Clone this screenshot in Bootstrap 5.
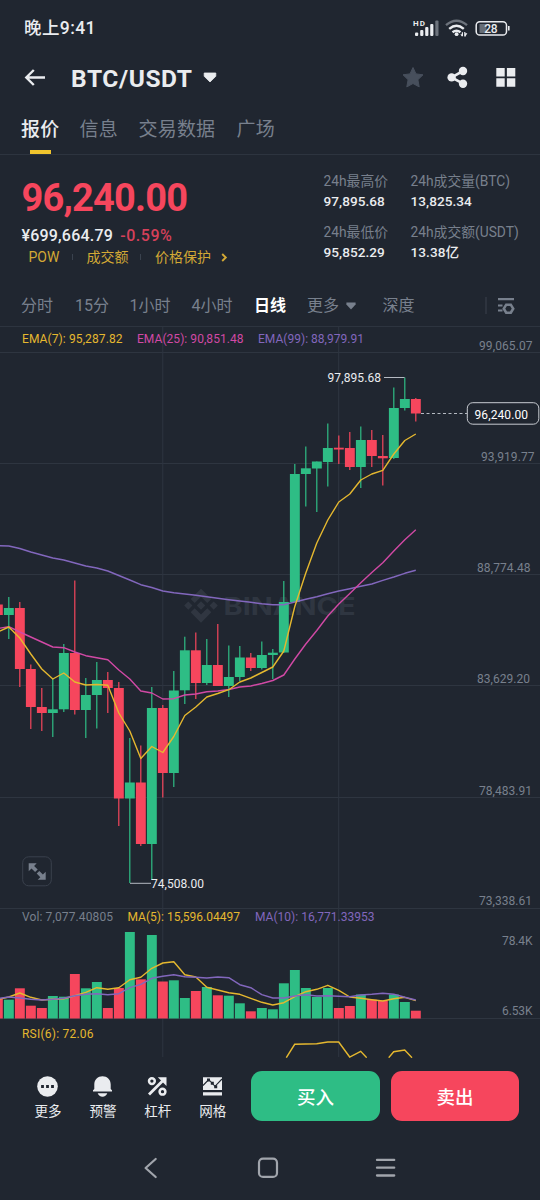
<!DOCTYPE html>
<html lang="zh-CN" data-bs-theme="dark">
<head>
<meta charset="utf-8">
<meta name="viewport" content="width=device-width, initial-scale=1">
<title>BTC/USDT</title>
<link rel="stylesheet" href="https://cdn.jsdelivr.net/npm/bootstrap@5.3.0/dist/css/bootstrap.min.css">
<style>
  :root { --ink:#202630; --fg:#eaecef; --dim:#78808d; --up:#2ebd85; --down:#f6465d; --gold:#e5b82f; --line:#2d343f; }
  body { background:var(--ink); color:var(--fg); font-family:Roboto,"Noto Sans CJK SC",sans-serif; width:540px; height:1200px; overflow:hidden; line-height:1; }
  svg { display:block; flex:none; }
  .status-bar { height:54px; padding:1px 30px 0 24px; font-size:17.5px; font-weight:500; }
  .status-bar > span { padding-top:2px; letter-spacing:.4px; }
  .title-bar { height:48px; padding:0 24px; }
  .pair-name { font-size:24.5px; font-weight:700; letter-spacing:.6px; margin-left:25px; padding-top:2px; }
  .page-tabs { height:53px; display:grid; grid-template-columns:58.5px 59px 98px 60px; padding-left:21px; font-size:19px; color:var(--dim); border-bottom:1px solid var(--line); }
  .page-tabs > a { color:inherit; text-decoration:none; padding-top:18px; position:relative; white-space:nowrap; letter-spacing:.2px; }
  .page-tabs > a.active { color:var(--fg); font-weight:500; }
  .page-tabs > a.active::after { content:""; position:absolute; left:8.5px; bottom:0; width:21px; height:4px; background:#f0c42d; }
  .summary { height:130px; display:grid; grid-template-columns:302px 87px 1fr; padding-left:21.5px; white-space:nowrap; }
  .last-price { font-size:38px; font-weight:700; color:var(--down); line-height:40px; margin-top:23px; letter-spacing:-.8px; }
  .fiat-row { font-size:16px; font-weight:500; line-height:20px; margin-top:8px; letter-spacing:.2px; }
  .fiat-row span { color:#d5405a; margin-left:3px; letter-spacing:.55px; }
  .tag-row { font-size:14px; color:#d3a935; line-height:20px; margin-top:1px; padding-left:7px; display:grid; grid-template-columns:43.5px 14.5px 53px 15.5px 66px auto; }
  .tag-row i { width:1px; height:6px; background:#3a424e; align-self:center; }
  .stat-k { font-size:13.8px; color:var(--dim); line-height:20px; }
  .stat-v { font-size:13.6px; font-weight:500; line-height:20px; margin-bottom:11px; letter-spacing:.05px; }
  .intervals { height:42px; display:grid; grid-template-columns:54px 54.5px 62px 62.5px 53px 39px 36.5px 102.5px 12px auto; align-items:center; padding-left:21px; font-size:16px; color:var(--dim); border-bottom:1px solid var(--line); white-space:nowrap; }
  .intervals > span, .intervals > b { padding-top:1px; }
  .intervals b { color:#fff; font-weight:700; }
  .chart text { font-family:Roboto,"Noto Sans CJK SC",sans-serif; font-size:12px; }
  .action-bar { height:77px; padding:0 20.5px; }
  .quick { width:55px; font-size:13.5px; padding-top:18px; }
  .quick span { margin-top:7px; line-height:14px; }
  .trade { height:50px; border-radius:11px; border:0; color:#fff; font-size:18.5px; font-weight:500; padding:4px 0 0; margin-top:13px; line-height:1; }
  .buy { background:var(--up); width:128.5px; margin-left:11px; }
  .sell { background:var(--down); width:129px; margin-left:11px; }
  .sys-nav { height:65px; padding:0 144px; display:grid; grid-template-columns:113px 117px 20px; align-items:center; }
</style>
</head>
<body class="d-flex flex-column m-0">

<header class="status-bar d-flex align-items-center justify-content-between">
  <span>晚上9:41</span>
  <svg width="98" height="20" viewBox="412 17 98 20" fill="#eaecef">
    <text x="413" y="25.2" font-size="8" font-weight="700" textLength="12" font-family="Roboto">HD</text>
    <rect x="415" y="31.5" width="3.2" height="3.5" rx="1"/><rect x="420.2" y="29" width="3.2" height="6" rx="1"/><rect x="425.2" y="26" width="3.2" height="9" rx="1"/><rect x="430.2" y="23" width="3.2" height="12" rx="1"/><rect x="435.3" y="19.5" width="3.2" height="15.5" rx="1" fill="#6d737c"/>
    <g fill="none" stroke-width="2.4" stroke="#eaecef"><path d="M446 24.2Q456.5 15.5 467 24.2" stroke="#6d737c"/><path d="M449.2 27.8Q456.5 21.6 463.8 27.8M452.5 31.3Q456.5 28 460.5 31.3"/></g>
    <circle cx="456.6" cy="33.2" r="1.9"/>
    <path d="M463 31.3v4h-1.4l-1.2-2h1.4v-2zM464.2 35.5v-4.4h1.2v1.2h2l-1.6 2.4v.8z"/>
    <rect x="476.2" y="20.7" width="30.3" height="13.3" rx="3.6" fill="none" stroke="#eaecef" stroke-width="1.5"/>
    <path d="M479.5 23h7v9h-7z" fill="#666d76"/><path d="M508 25h1.6v4.6H508z"/>
    <text x="484.3" y="31.6" font-size="12" textLength="13.3" font-family="Roboto">28</text>
  </svg>
</header>

<nav class="title-bar d-flex align-items-center">
  <svg width="22" height="20" viewBox="0 0 22 20" fill="none" stroke="#eaecef" stroke-width="2.4"><path d="M21 9.500H2.500M9.800 2 2.300 9.500l7.500 7.500"/></svg>
  <span class="pair-name">BTC/USDT</span>
  <svg class="me-auto" style="margin-left:9px" width="16" height="12" viewBox="0 0 16 12"><path d="M2.200 1h11.600v3.300L8 10 2.200 4.300z" fill="#eaecef" stroke="#eaecef" stroke-width=".8" stroke-linejoin="round"/></svg>
  <svg width="114" height="24" viewBox="402 66 114 24">
    <path d="M413 67.5l3 6.400 7 .9-5.100 4.900 1.300 7.200-6.200-3.400-6.200 3.400 1.300-7.200-5.100-4.900 7-.9z" fill="#474f5c" stroke="#474f5c" stroke-linejoin="round"/>
    <g fill="#eaecef"><circle cx="451.6" cy="77.400" r="4.200"/><circle cx="463" cy="71" r="4.200"/><circle cx="463" cy="83.700" r="4.200"/><path d="M463 71l-11.400 6.400L463 83.700" fill="none" stroke="#eaecef" stroke-width="2.600"/>
    <path d="M496.300 68h8.400v8.400h-8.400zM506.900 68h8.400v8.400h-8.400zM496.300 78.300h8.400v8.400h-8.400zM506.900 78.300h8.400v8.400h-8.400z"/></g>
  </svg>
</nav>

<nav class="page-tabs"><a class="active" href="#">报价</a><a href="#">信息</a><a href="#">交易数据</a><a href="#">广场</a></nav>

<section class="summary">
  <div>
    <div class="last-price">96,240.00</div>
    <div class="fiat-row">¥699,664.79 <span>-0.59%</span></div>
    <div class="tag-row"><span>POW</span><i></i><span>成交额</span><i></i><span>价格保护</span><svg class="align-self-center" width="7" height="9" viewBox="0 0 7 9" fill="none" stroke="#d3a935" stroke-width="1.900"><path d="M1.200 1l3.600 3.500L1.200 8"/></svg></div>
  </div>
  <div class="pt-3 mt-0">
    <div class="stat-k mt-0 pt-0" style="padding-top:0">24h最高价</div><div class="stat-v">97,895.68</div>
    <div class="stat-k">24h最低价</div><div class="stat-v">95,852.29</div>
  </div>
  <div class="pt-3">
    <div class="stat-k">24h成交量(BTC)</div><div class="stat-v">13,825.34</div>
    <div class="stat-k">24h成交额(USDT)</div><div class="stat-v">13.38亿</div>
  </div>
</section>

<nav class="intervals">
  <span>分时</span><span>15分</span><span>1小时</span><span>4小时</span><b>日线</b><span>更多</span>
  <svg width="10" height="8" viewBox="0 0 10 8"><path d="M.400.500h9.200v2L5 7.500.400 2.500z" fill="#78808d"/></svg>
  <span>深度</span>
  <svg width="2" height="17"><path d="M1 0v17" stroke="#3a414d"/></svg>
  <svg width="18" height="18" viewBox="0 0 18 18" fill="none" stroke="#78808d" stroke-width="2.200"><path d="M1 2.200h16M1 8.500h4.500M1 13.500h4.500"/><path d="M9.200 7.700h4.600l2.400 4-2.400 4H9.200l-2.400-4z" stroke-width="2.600"/></svg>
</nav>

<main>
  <svg class="chart" id="chart" width="540" height="731" viewBox="0 327 540 731"></svg>
</main>

<footer class="action-bar d-flex">
  <div class="quick d-flex flex-column align-items-center">
    <svg width="21" height="21" viewBox="0 0 21 21"><circle cx="10.5" cy="10.5" r="10.3" fill="#eaecef"/><path d="M4.100 9.100h2.800v2.800H4.100zM9.100 9.100h2.800v2.800H9.100zM14.100 9.100h2.800v2.800h-2.800z" fill="#202630"/></svg><span>更多</span></div>
  <div class="quick d-flex flex-column align-items-center">
    <svg width="21" height="21" viewBox="0 0 21 21" fill="#eaecef"><path d="M2.300 13V8.500C2.300 3.400 6 .2 10.500.2s8.200 3.200 8.200 8.300V13l1.300 1.300v1.300H1v-1.300zM5.700 17.200h9.600c-.9 2.200-2.500 3.500-4.800 3.500s-3.900-1.300-4.800-3.500z"/></svg><span>预警</span></div>
  <div class="quick d-flex flex-column align-items-center">
    <svg width="21" height="21" viewBox="0 0 21 21" fill="none" stroke="#eaecef" stroke-width="2.500"><circle cx="4.900" cy="5.100" r="2.900"/><circle cx="15.500" cy="15.700" r="2.900"/><path d="M2 18.500 16.500 4" stroke-width="2.800"/><path d="M10.800 1.300h8.700V10z" fill="#eaecef" stroke="none"/></svg><span>杠杆</span></div>
  <div class="quick d-flex flex-column align-items-center">
    <svg width="21" height="21" viewBox="0 0 21 21"><path d="M1 1.200h19v12.800H1zM1 16.200h19v3.300H1z" fill="#eaecef"/><path d="M1 9.500 6.700 3.500 13 10.300 20 3" fill="none" stroke="#202630" stroke-width="1.100"/><path d="M5 2.500h3v3H5zM8.800 5.800h3v3h-3zM12.200 9.300h3v3h-3z" fill="#202630"/></svg><span>网格</span></div>
  <button class="btn trade buy" type="button">买入</button>
  <button class="btn trade sell" type="button">卖出</button>
</footer>

<nav class="sys-nav">
  <svg width="14" height="22" viewBox="0 0 14 22" fill="none" stroke="#a1a5ac" stroke-width="2.200" stroke-linecap="round" stroke-linejoin="round"><path d="M11.700 2 1.600 11l10.100 9"/></svg>
  <svg width="22" height="22" viewBox="0 0 22 22" fill="none" stroke="#a1a5ac" stroke-width="2.200"><rect x="2" y="1.700" width="18" height="18.200" rx="4"/></svg>
  <svg width="22" height="22" viewBox="0 0 22 22" stroke="#a1a5ac" stroke-width="2.300" stroke-linecap="round"><path d="M3 2.900h17.200M3 10.700h17.200M3 18.500h17.200"/></svg>
</nav>

<script src="https://cdn.jsdelivr.net/npm/bootstrap@5.3.0/dist/js/bootstrap.bundle.min.js"></script>
<script>
  const UP = '#2ebd85', DOWN = '#f6465d', GOLD = '#e5b82f', PINK = '#d149a5', VIOLET = '#8267bd', DIM = '#78808d';
  const cx = i => 8.8 + 11 * (i - 1);
  // direction, wick top, body top, body bottom, wick bottom, volume top
  const candles = [
    ['r',604.5,604.5,615,615,999],['g',597,608,615,639,999.7],['r',602,608,669,687,988.3],['r',664.5,669,707,729,1005.7],
    ['r',688,707,713,731,1008],['g',679,709.3,713,737,996],['g',644,653,709.3,712,996.7],['r',580.5,653,710,714.5,974],
    ['g',678,695,710,738,988.3],['g',662,680,695,728.5,982],['r',672,680,688,713,1008],['r',682,688,798.5,826,988],
    ['g',738,782.5,798.5,883,932],['r',745.5,782.5,844,846,979.3],['g',687,708,844,880,935],['r',705,708,773,797.5,981.5],
    ['g',671,690.5,773,787,980.3],['g',636.7,650.3,690.3,704,998],['r',632.5,650.3,683,699,991],['g',639,665,683,685,987],
    ['r',624,665,686,686,995.3],['g',645.5,677,686,697,995.7],['g',646,657.5,677,681,1003.3],['r',653,657.5,668,671,1011.3],
    ['g',641.5,655,668,669.5,1008],['g',649,652.7,655,679,1009.3],['g',581,602,652.5,653,983.3],['g',464,474,602,602,970],
    ['g',446.5,468.3,474,506.5,988],['g',461.5,461.5,468.5,512,997],['g',423.5,448,462,486.5,988],['r',435.5,447.7,449.5,464,1008],
    ['r',432,448,467,470,1006],['g',426.5,440,467,488,994.5],['r',430,440,456,467,999.7],['r',435,456,458.3,485.5,1000.5],
    ['g',387.5,408,458,459,994.5],['g',377.5,399,408,410.5,1002],['r',398,399,413.5,421.5,1010.7]
  ];
  const series = [
    [VIOLET,[545.7,546,548.5,552,555,558,560,563,566,568,571,575.5,580,584.7,587.5,591,592.7,594,595.3,596.7,598.3,599.7,601,602.3,603.7,604.7,604.7,602,599.3,596.7,593.7,591,588.7,586.3,584,580.3,577,573.3,570.3]],
    [PINK,[628.5,626.7,632,637,642,647,647.7,652,655.7,657.7,659.7,670,679,691,693,699,698.7,695,694,691.8,691,689.5,687,686,683.5,680.5,675,659,644,630.5,616,604,593.5,582.7,572.5,562.7,551,539.7,529.7]],
    [GOLD,[632,627,638,654,669,679,673,682,685,684.5,685.3,713,731,758.5,746.5,752.5,736.5,715.5,707,697,693.5,689.7,682,678,672.5,667,651,606.5,573,543,520,502,494,480,474,470.3,454,440.5,434]],
    [GOLD,[999.5,997,993,997.3,1000,999.3,998.7,995.7,992.3,987.7,989.3,987.7,979.7,977.3,968.3,963,961.7,974.7,977,987.3,990,992.7,994.3,998.3,1002.3,1005,1002.7,996.7,991.7,989.3,985.3,990.3,997,998.3,999.7,1001,998.7,997.3,1000.7]],
    [VIOLET,[998.5,997,998,999.3,1000,999.3,998.3,995.7,994.3,993.7,994.7,993.7,987.7,984.3,978.3,976.3,974.7,976.7,977.3,978,977,977.7,984.7,987.7,994.7,998,998,996,994.7,996,995.7,996.3,996.7,995,994.3,993.3,994.3,997.3,1000]]
  ];
  const label = (x, y, w, t, c, size = 12) => `<text x="${x}" y="${y}" textLength="${w}" fill="${c}" style="font-size:${size}px">${t}</text>`;
  let s = '<g stroke="#2e3540">';
  for (const y of [352.5, 463.5, 574.5, 685.5, 797.5, 908.5, 1018.5]) s += `<path d="M0 ${y}H540"/>`;
  s += '<path d="M162.800 327V1057M338.700 327V1057"/></g>';
  // watermark
  s += `<g fill="#353c47" fill-opacity=".75"><path d="M201 588.700l10.300 10.300-4 4-6.300-6.300-6.300 6.300-4-4zM201 601.300l4.200 4.200-4.200 4.200-4.200-4.200zM188.300 601.500l4.100 4.100-4.100 4.100-4.100-4.100zM213.700 601.500l4.100 4.100-4.100 4.100-4.100-4.100zM190.700 612.300l4-4 6.300 6.300 6.300-6.300 4 4L201 622.700z"/>
    <text x="223.500" y="614.500" textLength="132" lengthAdjust="spacingAndGlyphs" style="font-family:Inter,sans-serif;font-size:24.500px;font-weight:700">BINANCE</text></g>`;
  candles.forEach(([d, wt, bt, bb, wb, v], i) => {
    const c = d === 'g' ? UP : DOWN, x = cx(i), left = x - 4.9;
    s += `<g fill="${c}"><rect x="${x - .6}" y="${wt}" width="1.200" height="${wb - wt}"/><rect x="${left}" y="${bt}" width="9.900" height="${bb - bt}"/><rect x="${left}" y="${v}" width="9.900" height="${1018.5 - v}"/></g>`;
  });
  for (const [c, ys] of series) s += `<polyline fill="none" stroke="${c}" stroke-width="1.400" stroke-linejoin="round" points="${ys.map((y, i) => cx(i) + ',' + y).join(' ')}"/>`;
  s += `<path fill="none" stroke="${GOLD}" stroke-width="1.400" d="M286.300 1057.700 294.700 1044.300 316.700 1043.700 327.700 1042H338.700L349.700 1057 360.700 1051.300 366.700 1057.700M388.700 1057.700 393.700 1051.700 404.700 1050 412 1057.700"/>`;
  s += '<path d="M384 377.500H404.500M130 883.300H151" stroke="#b5bac2" fill="none"/><path d="M421 413.500H467" stroke="#b5bac2" stroke-dasharray="3 2.500"/>';
  s += '<rect x="467.300" y="402.700" width="71.500" height="21.500" rx="5.500" fill="#202630" stroke="#c7cbd1"/>';
  s += label(474.5, 419, 53.5, '96,240.00', '#fff') + label(327.5, 381.8, 53.5, '97,895.68', '#eaecef') + label(151, 887.5, 53, '74,508.00', '#eaecef');
  s += label(22, 342.5, 100.5, 'EMA(7): 95,287.82', GOLD) + label(137, 342.5, 106.5, 'EMA(25): 90,851.48', PINK) + label(258, 342.5, 106, 'EMA(99): 88,979.91', VIOLET);
  s += label(479, 349.8, 53.5, '99,065.07', DIM) + label(481, 461, 53.5, '93,919.77', DIM) + label(477, 572, 53.5, '88,774.48', DIM) + label(477, 683.3, 53, '83,629.20', DIM) + label(479, 794.5, 53, '78,483.91', DIM) + label(479, 904.8, 53, '73,338.61', DIM);
  s += label(22, 921, 91, 'Vol: 7,077.40805', DIM) + label(127.5, 921, 112.5, 'MA(5): 15,596.04497', GOLD) + label(255, 921, 119.5, 'MA(10): 16,771.33953', VIOLET);
  s += label(502, 944.5, 30.5, '78.4K', DIM) + label(502, 1014.5, 30.5, '6.53K', DIM) + label(22, 1037.8, 71.5, 'RSI(6): 72.06', GOLD);
  // full-screen button
  s += '<rect x="22.700" y="856.800" width="28.600" height="29" rx="6" fill="#202630" stroke="#3a414d"/><path fill="#78808d" d="M28.700 863.300h8l-2.600 2.600 3.600 3.600-2.600 2.600-3.600-3.600-2.800 2.800zM45.700 879.800h-8l2.600-2.600-3.600-3.600 2.600-2.600 3.600 3.600 2.800-2.800z"/>';
  document.getElementById('chart').innerHTML = s;
</script>
</body>
</html>
